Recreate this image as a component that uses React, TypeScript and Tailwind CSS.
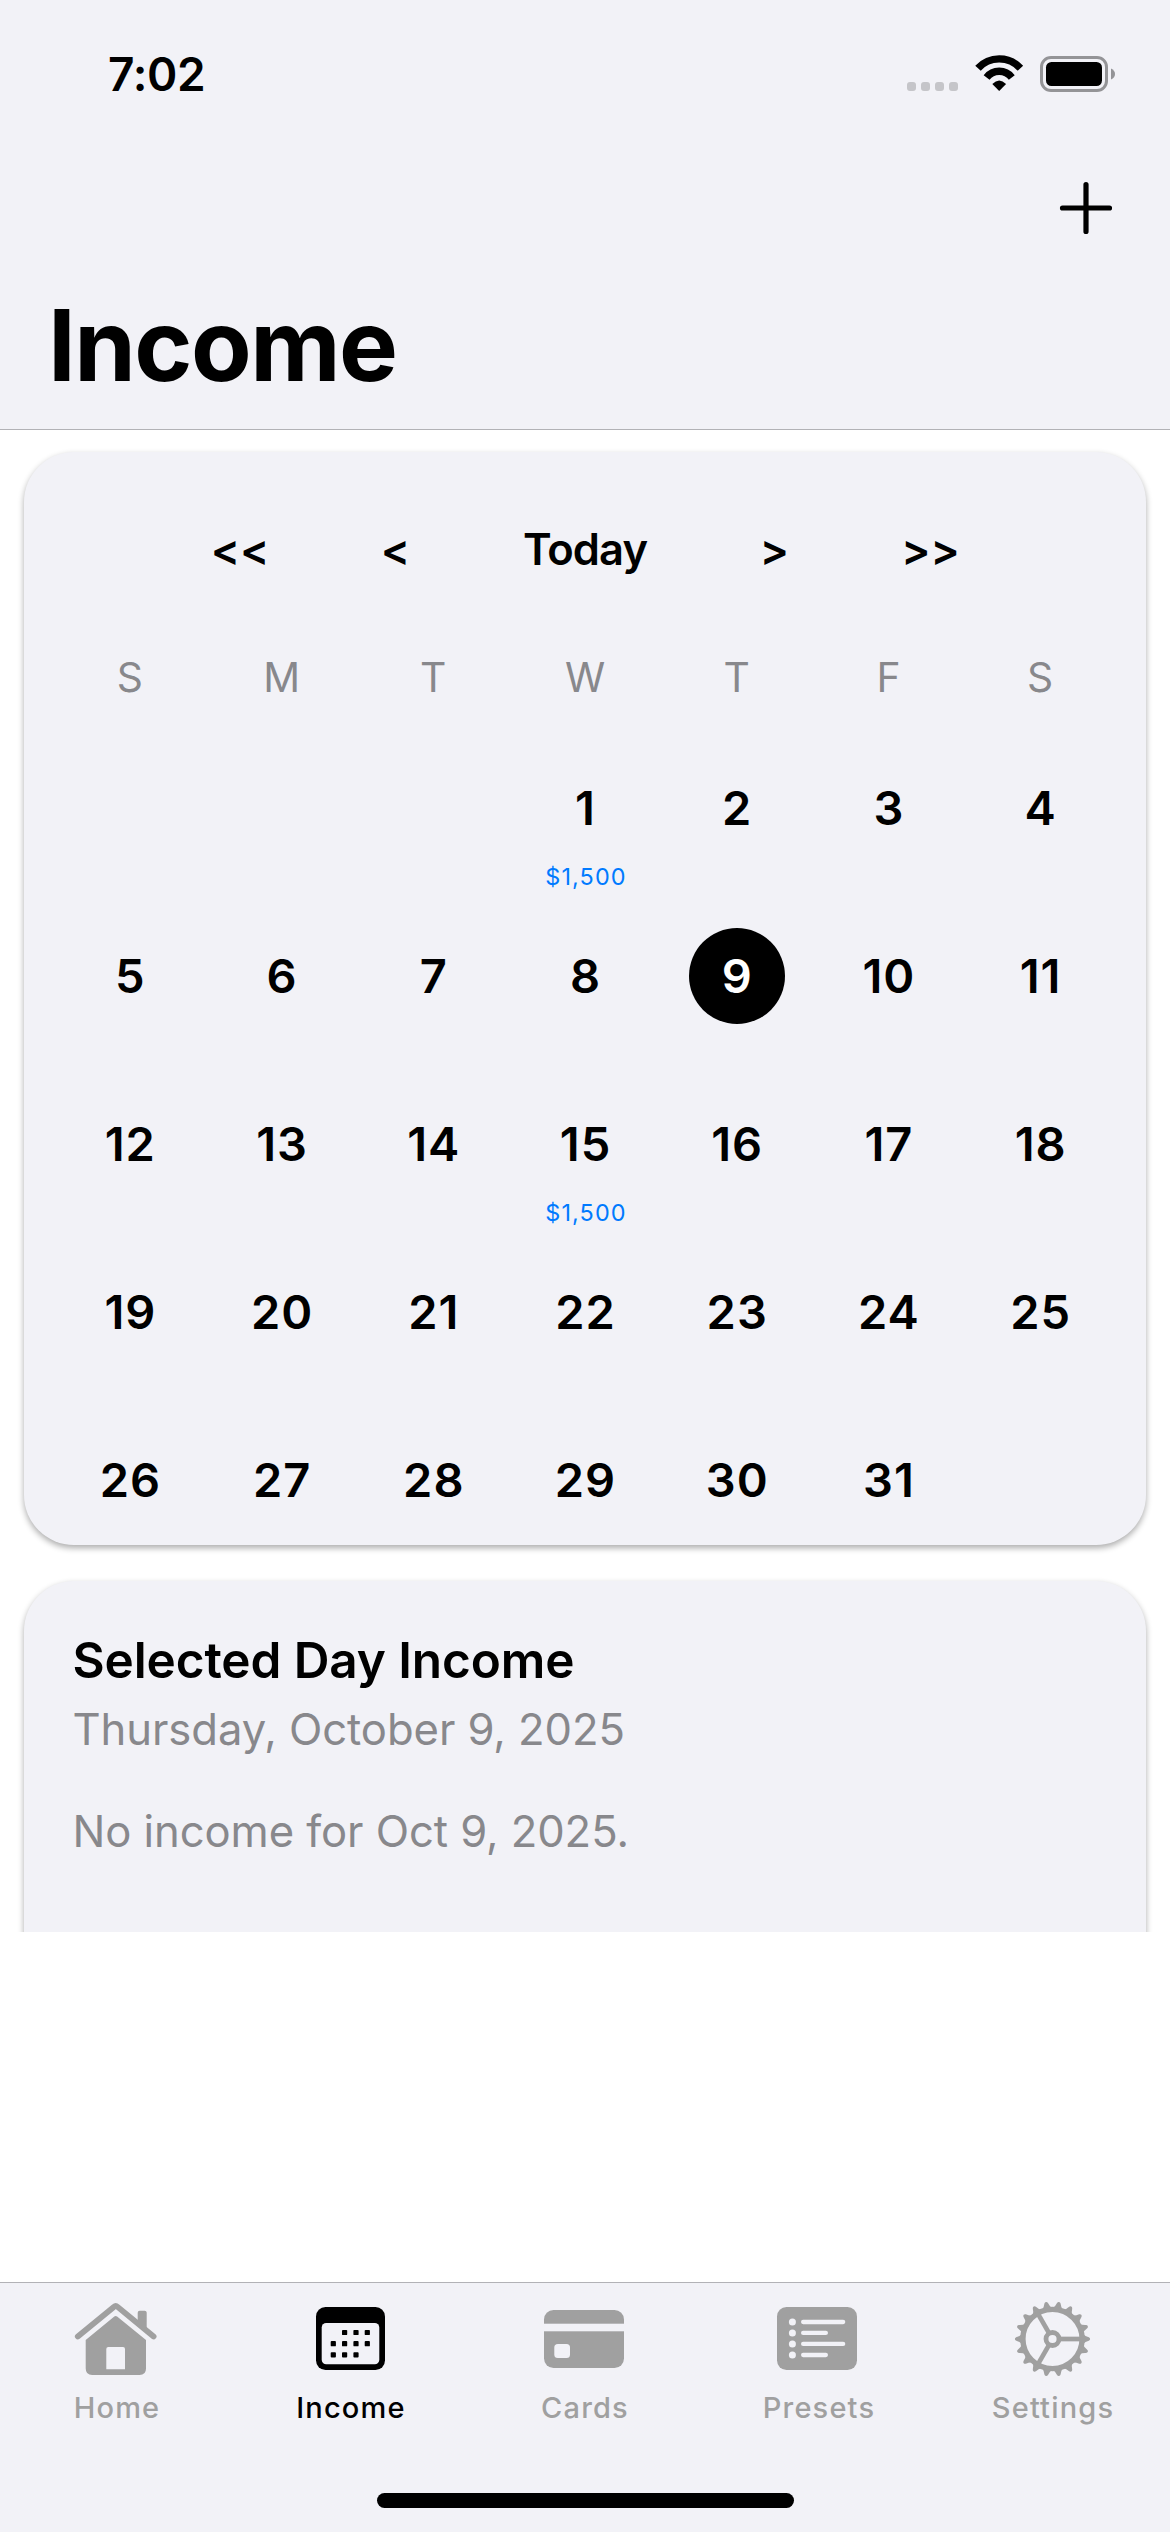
import type { ReactNode } from "react";

const WEEKDAYS = ["S", "M", "T", "W", "T", "F", "S"];

const WEEKS: (number | null)[][] = [
  [null, null, null, 1, 2, 3, 4],
  [5, 6, 7, 8, 9, 10, 11],
  [12, 13, 14, 15, 16, 17, 18],
  [19, 20, 21, 22, 23, 24, 25],
  [26, 27, 28, 29, 30, 31, null],
];

const INCOME: Record<number, string> = { 1: "$1,500", 15: "$1,500" };
const SELECTED = 9;

const SURFACE = "#f2f2f7";
const CARD_SHADOW = "shadow-[0_3px_6px_rgba(0,0,0,0.33)]";

function StatusIcons() {
  return (
    <div className="-mt-[2px] flex h-[37px] items-start">
      <svg width="51" height="37" viewBox="0 0 51 37" fill="#c5c5c9">
        {[0, 14, 28, 42].map((x) => (
          <rect key={x} x={x} y="27" width="9" height="9" rx="3" />
        ))}
      </svg>
      <span className="w-[17px]" />
      <svg width="49" height="37" viewBox="0 0 49 37" fill="none" stroke="#000" strokeWidth="7.4">
        <path d="M3 13.3A28.6 28.6 0 0 1 45.4 13.3" />
        <path d="M11.6 22.5A15.9 15.9 0 0 1 36.8 22.5" />
        <path d="M24.2 36L17.3 29.1Q24.2 22 31.1 29.1Z" fill="#000" stroke="none" />
      </svg>
      <span className="w-[16px]" />
      <svg width="75" height="37" viewBox="0 0 75 37">
        <rect x="1.5" y="2.5" width="65" height="33" rx="9.5" fill="none" stroke="#949497" strokeWidth="3" />
        <rect x="6" y="7" width="56" height="24" rx="5.5" fill="#000" />
        <path d="M71 13.5Q75 15.5 75 19Q75 22.5 71 24.5Z" fill="#949497" />
      </svg>
    </div>
  );
}

function HomeIcon() {
  return (
    <svg width="100" height="90" viewBox="0 0 100 90" fill="currentColor">
      <path
        d="M10.8 41.5L46.8 11.9Q48.7 10.3 50.6 11.9L86.6 41.5"
        fill="none"
        stroke="currentColor"
        strokeWidth="5.8"
        strokeLinecap="round"
      />
      <path d="M70.7 27V17.7Q70.7 15.7 72.7 15.7H77.7Q79.7 15.7 79.7 17.7V34Z" />
      <path
        fillRule="evenodd"
        d="M47.3 21.5Q48.7 20.5 50.1 21.5L79 45V73.5Q79 80 72.5 80H25.2Q18.7 80 18.7 73.5V45ZM41.3 52Q39.3 52 39.3 54V74.3H58V54Q58 52 56 52Z"
      />
    </svg>
  );
}

function CalendarIcon() {
  const xs = [32.3, 43.6, 55, 66.3];
  const rows = [
    { y: 37.5, from: 1, to: 4 },
    { y: 48.7, from: 0, to: 4 },
    { y: 59.8, from: 0, to: 3 },
  ];
  return (
    <svg width="100" height="90" viewBox="0 0 100 90" fill="currentColor">
      <rect x="15" y="12" width="69" height="63" rx="9.5" />
      <rect x="20.7" y="28" width="57.6" height="41.3" rx="4.5" fill={SURFACE} />
      {rows.map((r) =>
        xs.slice(r.from, r.to).map((x) => (
          <rect key={`${x}-${r.y}`} x={x - 2.6} y={r.y - 2.6} width="5.2" height="5.2" rx="0.9" />
        )),
      )}
    </svg>
  );
}

function CardIcon() {
  return (
    <svg width="100" height="90" viewBox="0 0 100 90" fill="currentColor">
      <rect x="9" y="15" width="80" height="58" rx="9.5" />
      <rect x="8" y="28.7" width="82" height="7.6" fill={SURFACE} />
      <rect x="19.3" y="49" width="15.7" height="14" rx="3.5" fill={SURFACE} />
    </svg>
  );
}

function ListIcon() {
  return (
    <svg width="100" height="90" viewBox="0 0 100 90" fill="currentColor">
      <rect x="8" y="12" width="80" height="63" rx="9.5" />
      {[27, 37.9, 48.9, 60].map((y, i) => (
        <g key={y} fill={SURFACE}>
          <circle cx="23.4" cy={y} r="3.5" />
          <rect x="32" y={y - 2.15} width={i % 2 ? 27 : 44.3} height="4.3" rx="2.15" />
        </g>
      ))}
    </svg>
  );
}

function GearIcon() {
  return (
    <svg width="100" height="90" viewBox="0 0 100 90" fill="none" stroke="currentColor">
      <g transform="translate(49.5 44)">
        <circle r="29.6" strokeWidth="5.4" />
        <circle r="6.5" strokeWidth="4.8" />
        {Array.from({ length: 18 }, (_, i) => (
          <path
            key={i}
            transform={`rotate(${i * 20})`}
            d="M31 -4.8Q32.5 -3 36.3 -1.8Q37.6 -1.2 37.6 0Q37.6 1.2 36.3 1.8Q32.5 3 31 4.8Z"
            fill="currentColor"
            stroke="none"
          />
        ))}
        {[0, 120, 240].map((a) => (
          <path key={a} transform={`rotate(${a})`} d="M8 0H29" strokeWidth="4.7" />
        ))}
      </g>
    </svg>
  );
}

function Tab({ icon, label, active }: { icon: ReactNode; label: string; active?: boolean }) {
  return (
    <button className={`flex flex-col items-center ${active ? "text-black" : "text-[#a0a0a0]"}`}>
      {icon}
      <span className="text-[29px] leading-[45px] font-medium tracking-[1.18px]">{label}</span>
    </button>
  );
}

function Day({ day }: { day: number | null }) {
  if (day === null) return <div />;
  const selected = day === SELECTED;
  return (
    <div className="flex flex-col items-center">
      <div
        className={`flex size-[96px] items-center justify-center rounded-full pl-[1px] text-[47px] leading-[96px] font-semibold tracking-[1px] ${
          selected ? "bg-black text-white" : "text-black"
        }`}
      >
        {day}
      </div>
      {INCOME[day] && (
        <div className="pl-[2px] text-[23.4px] leading-[41px] tracking-[1.1px] text-[#007aff]">{INCOME[day]}</div>
      )}
    </div>
  );
}

export default function App() {
  return (
    <div className="flex h-[2532px] w-[1170px] flex-col overflow-hidden bg-white font-['Inter',sans-serif] text-black">
      <header className="h-[430px] shrink-0 border-b border-[#b2b2b6] bg-[#f2f2f7]">
        <div className="flex h-[149px] items-center justify-between pr-[55px] pl-[108px]">
          <span className="text-[46px] font-semibold tracking-[-0.3px]">7:02</span>
          <StatusIcons />
        </div>
        <div className="flex h-[117px] items-center justify-end pr-[57px]">
          <svg width="54" height="54" viewBox="0 0 54 54" stroke="#000" strokeWidth="5.2" strokeLinecap="round">
            <path d="M27 3.5V50.5M3.5 27H50.5" />
          </svg>
        </div>
        <h1 className="mt-[19px] pl-[48px] text-[99px] leading-[120px] font-bold tracking-[-1.55px]">Income</h1>
      </header>

      <main className="h-[1502px] shrink-0 overflow-hidden px-[24px] pt-[22px]">
        <section className={`rounded-[50px] bg-[#f2f2f7] px-[30px] pb-[17px] ${CARD_SHADOW}`}>
          <div className="grid h-[195px] grid-cols-[151px_161px_218px_161px_151px] items-center justify-center text-center text-[43.5px] font-semibold">
            <span className="pt-[3px] pl-[1px]">&lt;&lt;</span>
            <span className="pt-[3px]">&lt;</span>
            <span className="tracking-[-0.93px]">Today</span>
            <span className="pt-[3px]">&gt;</span>
            <span className="pt-[3px]">&gt;&gt;</span>
          </div>
          <div className="mb-[57px] grid h-[56px] grid-cols-7 items-center text-center text-[40.8px] text-[#88888c]">
            {WEEKDAYS.map((d, i) => (
              <span key={i}>{d}</span>
            ))}
          </div>
          {WEEKS.map((week, i) => (
            <div key={i} className="grid h-[168px] grid-cols-7 last:h-[96px]">
              {week.map((d, j) => (
                <Day key={j} day={d} />
              ))}
            </div>
          ))}
        </section>

        <section className={`mt-[36px] h-[420px] rounded-[50px] bg-[#f2f2f7] pt-[49px] pl-[48.5px] ${CARD_SHADOW}`}>
          <h2 className="text-[49.5px] leading-[60px] font-semibold tracking-[-0.11px]">Selected Day Income</h2>
          <p className="mt-[13px] text-[43.6px] leading-[54px] tracking-[-0.06px] text-[#88888c]">
            Thursday, October 9, 2025
          </p>
          <p className="mt-[48px] text-[43.6px] leading-[54px] tracking-[-0.07px] text-[#88888c]">
            No income for Oct 9, 2025.
          </p>
        </section>
      </main>

      <nav className="mt-auto flex h-[250px] shrink-0 flex-col items-center border-t border-[#b2b2b6] bg-[#f2f2f7] pt-[12px] pb-[24px]">
        <div className="grid w-full grid-cols-5">
          <Tab icon={<HomeIcon />} label="Home" />
          <Tab icon={<CalendarIcon />} label="Income" active />
          <Tab icon={<CardIcon />} label="Cards" />
          <Tab icon={<ListIcon />} label="Presets" />
          <Tab icon={<GearIcon />} label="Settings" />
        </div>
        <div className="mt-auto h-[15px] w-[417px] rounded-full bg-black" />
      </nav>
    </div>
  );
}
